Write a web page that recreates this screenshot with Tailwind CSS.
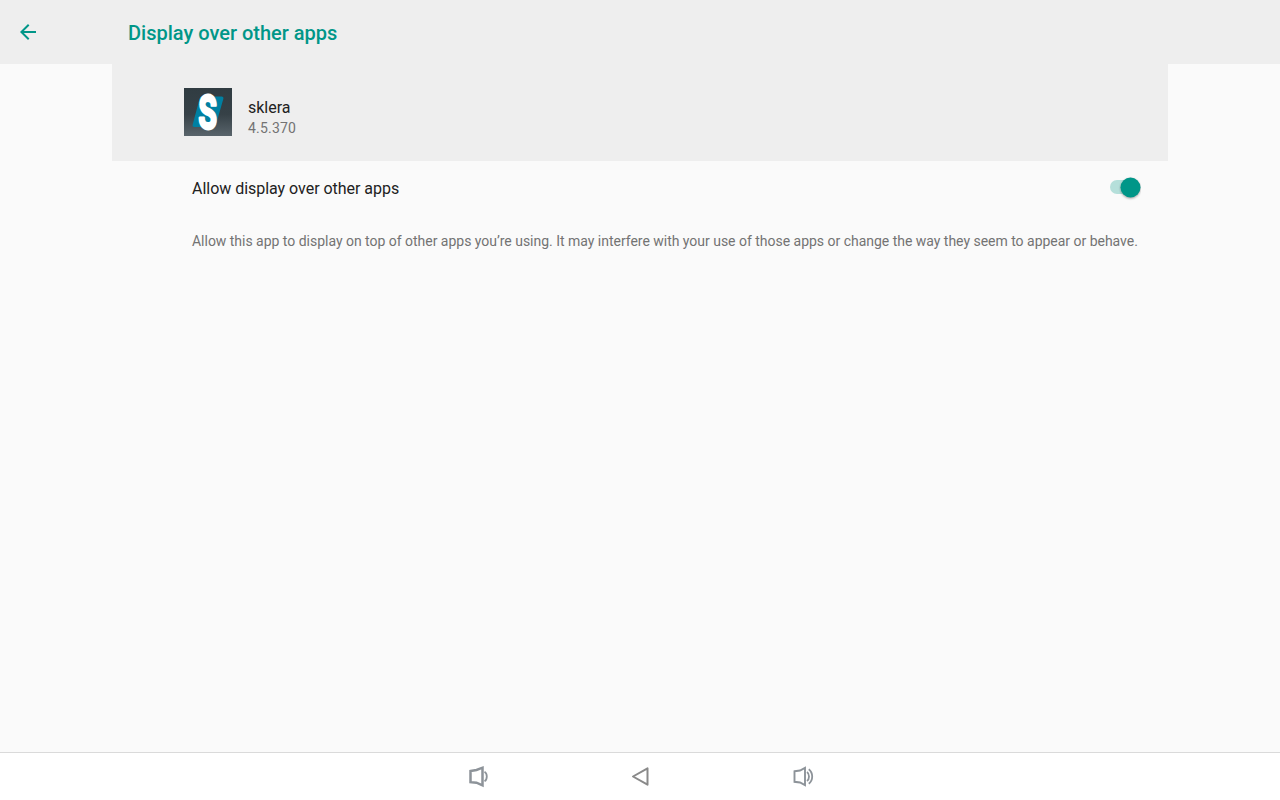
<!DOCTYPE html>
<html lang="en">
<head>
  <meta charset="UTF-8" />
  <meta name="viewport" content="width=device-width, initial-scale=1.0" />
  <title>Display over other apps</title>
  <script src="https://cdn.jsdelivr.net/npm/@tailwindcss/browser@4"></script>
</head>
<body class="h-screen flex flex-col overflow-hidden bg-[#fafafa] font-[Roboto,sans-serif]">
  <header class="h-16 shrink-0 flex items-center bg-[#eeeeee] text-[#009688]">
    <button class="w-32 h-16 pl-4 flex items-center" aria-label="Back">
      <svg class="w-6 h-6" viewBox="0 0 24 24" fill="currentColor"><path d="M20 11H7.83l5.59-5.59L12 4l-8 8 8 8 1.41-1.41L7.83 13H20v-2z" /></svg>
    </button>
    <h1 class="text-xl font-medium pt-0.5">Display over other apps</h1>
  </header>

  <main class="flex-1 mx-28">
    <section class="h-[97px] pl-[72px] pt-6 flex gap-4 bg-[#eeeeee]">
      <svg class="w-12 h-12 overflow-visible" viewBox="0 0 48 48">
        <defs>
          <linearGradient id="iconBg" x1="0" y1="0" x2="0" y2="1">
            <stop offset="0" stop-color="#303c42" />
            <stop offset="0.55" stop-color="#364147" />
            <stop offset="1" stop-color="#59646b" />
          </linearGradient>
        </defs>
        <rect width="48" height="48" fill="url(#iconBg)" />
        <path d="M18 8.500H37.500Q40 8.500 39.300 11L32 36.500Q31 39 29 39H10.500Q8 39 8.700 36.500L15.500 11Q16 8.500 18 8.500Z" fill="#0080a2" />
        <text transform="translate(23.700 41) scale(.62 1)" text-anchor="middle" class="font-[Roboto] font-bold text-[48px]" fill="#fff" stroke="#fff" stroke-width="3" stroke-linejoin="round">S</text>
      </svg>
      <div class="pt-2">
        <div class="text-base leading-[23px] pt-px -mt-px text-[#212121]">sklera</div>
        <div class="text-sm leading-[18px] tracking-[0.2px] text-[#737373]">4.5.370</div>
      </div>
    </section>

    <section class="h-[54px] pl-20 pr-[27px] flex items-center justify-between">
      <span class="text-base tracking-[-0.03px] pt-0.5 text-[#212121]">Allow display over other apps</span>
      <svg class="w-8 h-7" viewBox="0 0 32 28">
        <rect x="1" y="6" width="29" height="14" rx="7" fill="#b5dfda" />
        <circle cx="21.500" cy="13.500" r="10" fill="#009688" class="drop-shadow-[0_1px_1px_rgba(0,0,0,0.35)]" />
      </svg>
    </section>

    <p class="pl-20 pt-4 text-sm tracking-[-0.018px] text-[#737373] whitespace-nowrap">Allow this app to display on top of other apps you’re using. It may interfere with your use of those apps or change the way they seem to appear or behave.</p>
  </main>

  <nav class="h-12 shrink-0 flex items-center justify-center gap-[138px] border-t border-[#dadada] bg-white">
    <button aria-label="Volume down">
      <svg class="w-6 h-6" viewBox="-2 0.5 24 24" fill="none" stroke="#8d9399">
        <path d="M2.500 6.500L8.500 5.500L14.500 3.200V20.800L8.500 18.200L2.500 17.700Z" stroke-width="2.500" />
        <path d="M16.500 7.200Q18.800 8.500 18.800 12T16.500 16.800" stroke-width="1.800" />
      </svg>
    </button>
    <button aria-label="Back">
      <svg class="w-6 h-6" viewBox="0.5 0.5 24 24" fill="none" stroke="#8a8a8a"><path d="M5.500 12L20 3.800V20.200Z" stroke-width="2" stroke-linejoin="round" /></svg>
    </button>
    <button aria-label="Volume up">
      <svg class="w-6 h-6" viewBox="-2 0.5 24 24" fill="none" stroke="#8d9399">
        <path d="M2.500 6.800L8 6L13 3.300V20.700L8 18L2.500 17.300Z" stroke-width="1.900" />
        <path d="M15 7.500Q17 9 17 12T15 16.500M16.800 4.700Q20.200 7.500 20.200 12T16.800 19.300" stroke-width="1.800" />
      </svg>
    </button>
  </nav>
</body>
</html>
